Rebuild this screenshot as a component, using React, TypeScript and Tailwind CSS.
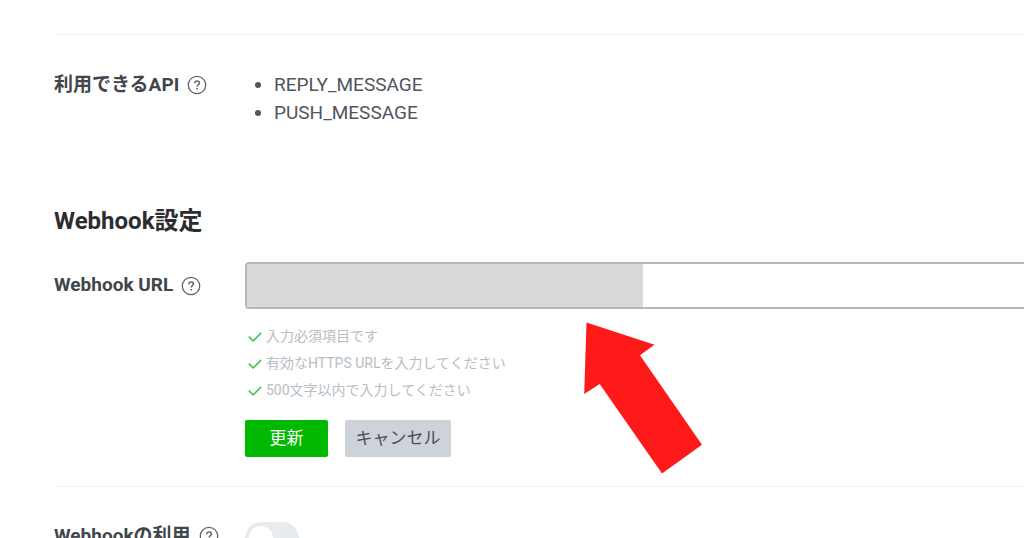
import React, { ReactNode } from "react";

const apis = ["REPLY_MESSAGE", "PUSH_MESSAGE"];

const hints = [
  "入力必須項目です",
  "有効なHTTPS URLを入力してください",
  "500文字以内で入力してください",
];

function HelpButton({ label }: { label: string }) {
  return (
    <button type="button" aria-label={label} className="ml-2 shrink-0 text-[#5f656a]">
      <svg width="20" height="20" viewBox="0 0 20 20" fill="none" stroke="currentColor">
        <circle cx="10" cy="10" r="8.7" strokeWidth="1.3" />
        <path
          d="M7.7 8.2c0-1.4 1-2.3 2.4-2.3s2.3.9 2.3 2.1c0 1.7-2.3 1.8-2.3 3.6"
          strokeWidth="1.5"
        />
        <circle cx="10.1" cy="13.7" r="0.9" fill="currentColor" stroke="none" />
      </svg>
    </button>
  );
}

function CheckIcon() {
  return (
    <svg width="14" height="10" viewBox="0 0 14 10" fill="none" className="shrink-0">
      <path d="M.8 4.6 5.2 8.8 13.2.9" stroke="#45c553" strokeWidth="1.6" />
    </svg>
  );
}

function Arrow() {
  return (
    <svg
      width="120"
      height="152"
      viewBox="0 0 120 152"
      aria-hidden="true"
      className="pointer-events-none absolute top-[60px] left-[338px]"
    >
      <path d="M3.5.5 71.5 22.8 57 33.2 119 122.8 79 151.5 16.7 62 1.2 72Z" fill="#ff1a1a" />
    </svg>
  );
}

function Row({ title, children }: { title: ReactNode; children: ReactNode }) {
  return (
    <div className="flex items-start">
      <div className="w-[191px] shrink-0 text-[19px] font-bold text-[#40464b]">{title}</div>
      <div className="relative min-w-0 flex-1">{children}</div>
    </div>
  );
}

export default function App() {
  return (
    <main className="h-screen overflow-hidden bg-white pl-[54px] font-[Roboto,'Noto_Sans_CJK_JP',sans-serif] text-[#4f565d]">
      <section className="mt-[34px] border-t border-[#eeeff0] pt-9">
        <Row
          title={
            <h3 className="flex h-7 items-center whitespace-nowrap">
              利用できるAPI
              <HelpButton label="利用できるAPIについて" />
            </h3>
          }
        >
          <ul className="list-disc pl-[29px] text-[19px] leading-7">
            {apis.map((api) => (
              <li key={api}>{api}</li>
            ))}
          </ul>
        </Row>
      </section>

      <section className="mt-[78px]">
        <h2 className="text-2xl leading-8 font-bold text-[#2b2d2f]">Webhook設定</h2>
        <form className="mt-[25px]" onSubmit={(e) => e.preventDefault()}>
          <Row
            title={
              <div className="flex h-[47px] items-center whitespace-nowrap">
                <label htmlFor="webhook-url">Webhook URL</label>
                <HelpButton label="Webhook URLについて" />
              </div>
            }
          >
            <div className="flex h-[47px] rounded-l-sm border-y-2 border-l-2 border-[#b0b7bd]">
              <div className="w-[396px] shrink-0 bg-[#d9d9d9]" />
              <input
                id="webhook-url"
                type="url"
                className="min-w-0 flex-1 bg-white px-2 text-[19px] outline-none"
              />
            </div>
            <ul className="mt-[14px] pl-[3px] text-sm leading-[27px] text-[#b7bdc4]">
              {hints.map((hint) => (
                <li key={hint} className="flex items-center gap-1">
                  <CheckIcon />
                  {hint}
                </li>
              ))}
            </ul>
            <div className="mt-4 flex gap-[17px] text-[17px]">
              <button
                type="submit"
                className="h-[37px] w-[83px] rounded-xs bg-[#00b900] text-white"
              >
                更新
              </button>
              <button
                type="button"
                className="h-[37px] w-[106px] rounded-xs bg-[#ced3da] text-[#484d52]"
              >
                キャンセル
              </button>
            </div>
            <Arrow />
          </Row>
        </form>
      </section>

      <section className="mt-[29px] border-t border-[#eeeff0] pt-[35px]">
        <Row
          title={
            <div className="flex h-7 items-center whitespace-nowrap">
              <label htmlFor="use-webhook">Webhookの利用</label>
              <HelpButton label="Webhookの利用について" />
            </div>
          }
        >
          <label className="flex h-8 w-[54px] items-center rounded-full bg-[#e9ecef] p-1 has-checked:justify-end has-checked:bg-[#00b900]">
            <input id="use-webhook" type="checkbox" className="sr-only" />
            <span className="size-6 rounded-full bg-white" />
          </label>
        </Row>
      </section>
    </main>
  );
}
